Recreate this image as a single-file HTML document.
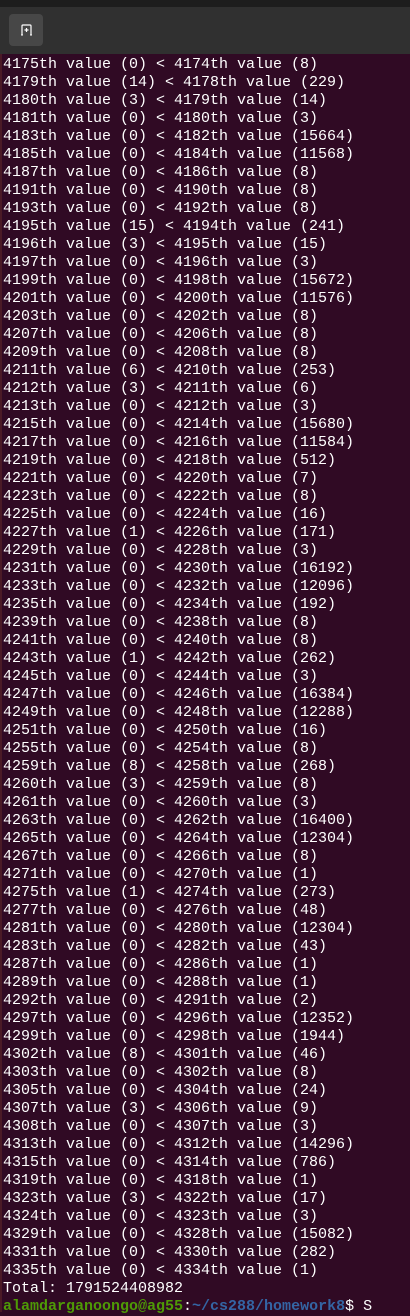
<!DOCTYPE html>
<html><head><meta charset="utf-8"><style>
html,body{margin:0;padding:0;width:410px;height:1312px;overflow:hidden;background:#300a24;}
.top{position:absolute;left:0;top:0;width:410px;height:7px;background:#1d1d1d;}
.hdr{position:absolute;left:0;top:7px;width:410px;height:47px;background:#303030;}
.btn{position:absolute;left:9px;top:14px;width:34px;height:32px;background:#474747;border-radius:4px;}
.term{position:absolute;left:0;top:54px;width:410px;height:1258px;background:#300a24;border-left:2px solid #4a1a26;box-sizing:border-box;}
pre{margin:0;position:absolute;left:3px;top:56px;font-family:"Liberation Mono",monospace;font-size:15px;line-height:18px;color:#ffffff;}
.g{color:#4e9a06;font-weight:bold}.b{color:#3465a4;font-weight:bold}
</style></head><body>
<div class="top"></div><div class="hdr"></div>
<div class="btn"><svg width="34" height="32" viewBox="0 0 34 32"><path d="M13 21 L13 12 Q13 11 14 11 L21 11 Q22 11 22 12 L22 21" fill="none" stroke="#fff" stroke-width="1.2"/><path d="M15.5 16 H19.5 M17.5 14 V18" stroke="#fff" stroke-width="1.2"/><path d="M12 21h2 M21 21h2" stroke="#fff" stroke-width="1"/></svg></div>
<div class="term"></div>
<pre>4175th value (0) &lt; 4174th value (8)
4179th value (14) &lt; 4178th value (229)
4180th value (3) &lt; 4179th value (14)
4181th value (0) &lt; 4180th value (3)
4183th value (0) &lt; 4182th value (15664)
4185th value (0) &lt; 4184th value (11568)
4187th value (0) &lt; 4186th value (8)
4191th value (0) &lt; 4190th value (8)
4193th value (0) &lt; 4192th value (8)
4195th value (15) &lt; 4194th value (241)
4196th value (3) &lt; 4195th value (15)
4197th value (0) &lt; 4196th value (3)
4199th value (0) &lt; 4198th value (15672)
4201th value (0) &lt; 4200th value (11576)
4203th value (0) &lt; 4202th value (8)
4207th value (0) &lt; 4206th value (8)
4209th value (0) &lt; 4208th value (8)
4211th value (6) &lt; 4210th value (253)
4212th value (3) &lt; 4211th value (6)
4213th value (0) &lt; 4212th value (3)
4215th value (0) &lt; 4214th value (15680)
4217th value (0) &lt; 4216th value (11584)
4219th value (0) &lt; 4218th value (512)
4221th value (0) &lt; 4220th value (7)
4223th value (0) &lt; 4222th value (8)
4225th value (0) &lt; 4224th value (16)
4227th value (1) &lt; 4226th value (171)
4229th value (0) &lt; 4228th value (3)
4231th value (0) &lt; 4230th value (16192)
4233th value (0) &lt; 4232th value (12096)
4235th value (0) &lt; 4234th value (192)
4239th value (0) &lt; 4238th value (8)
4241th value (0) &lt; 4240th value (8)
4243th value (1) &lt; 4242th value (262)
4245th value (0) &lt; 4244th value (3)
4247th value (0) &lt; 4246th value (16384)
4249th value (0) &lt; 4248th value (12288)
4251th value (0) &lt; 4250th value (16)
4255th value (0) &lt; 4254th value (8)
4259th value (8) &lt; 4258th value (268)
4260th value (3) &lt; 4259th value (8)
4261th value (0) &lt; 4260th value (3)
4263th value (0) &lt; 4262th value (16400)
4265th value (0) &lt; 4264th value (12304)
4267th value (0) &lt; 4266th value (8)
4271th value (0) &lt; 4270th value (1)
4275th value (1) &lt; 4274th value (273)
4277th value (0) &lt; 4276th value (48)
4281th value (0) &lt; 4280th value (12304)
4283th value (0) &lt; 4282th value (43)
4287th value (0) &lt; 4286th value (1)
4289th value (0) &lt; 4288th value (1)
4292th value (0) &lt; 4291th value (2)
4297th value (0) &lt; 4296th value (12352)
4299th value (0) &lt; 4298th value (1944)
4302th value (8) &lt; 4301th value (46)
4303th value (0) &lt; 4302th value (8)
4305th value (0) &lt; 4304th value (24)
4307th value (3) &lt; 4306th value (9)
4308th value (0) &lt; 4307th value (3)
4313th value (0) &lt; 4312th value (14296)
4315th value (0) &lt; 4314th value (786)
4319th value (0) &lt; 4318th value (1)
4323th value (3) &lt; 4322th value (17)
4324th value (0) &lt; 4323th value (3)
4329th value (0) &lt; 4328th value (15082)
4331th value (0) &lt; 4330th value (282)
4335th value (0) &lt; 4334th value (1)
Total: 1791524408982
<span class="g">alamdarganoongo@ag55</span>:<span class="b">~/cs288/homework8</span>$ S</pre>
</body></html>
